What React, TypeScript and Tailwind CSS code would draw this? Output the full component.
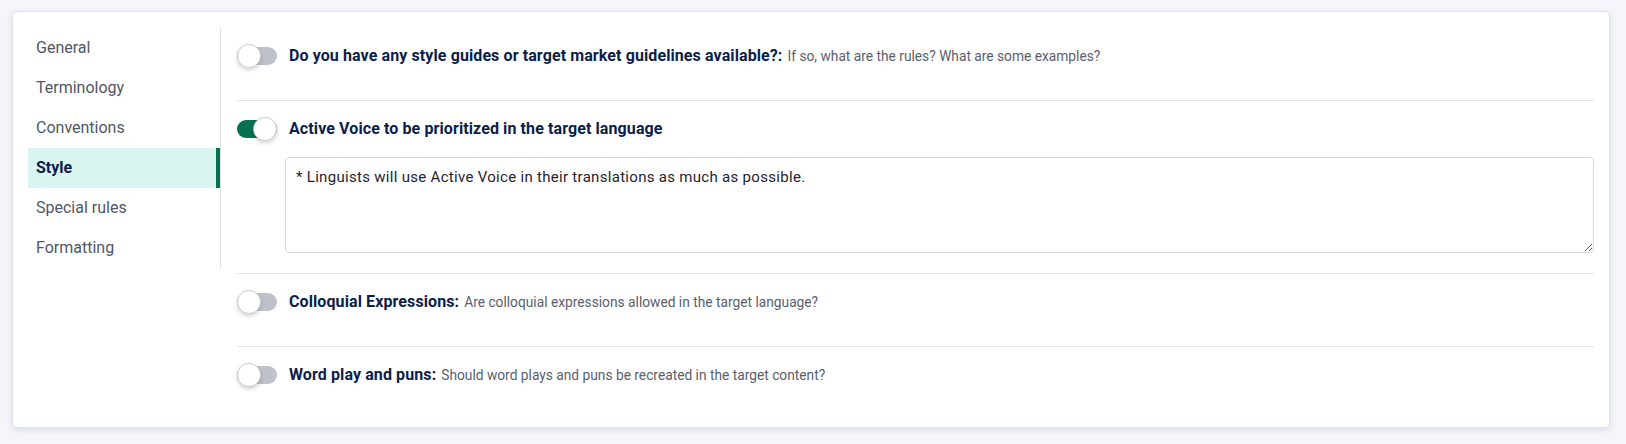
import React, { useState } from "react";

const navItems = ["General", "Terminology", "Conventions", "Style", "Special rules", "Formatting"];

function Toggle({ on }: { on: boolean }) {
  return (
    <div className="relative w-10 h-6 shrink-0 flex items-center">
      <div className={`w-10 h-[18px] rounded-full ${on ? "bg-[#07704f]" : "bg-[#bfc2cb]"}`} />
      <div
        className={`absolute top-0 ${on ? "left-4" : "left-0"} w-6 h-6 rounded-full bg-white border border-[#c9ccd4] shadow-[0_2px_4px_rgba(0,0,0,0.18)]`}
      />
    </div>
  );
}

function Row({
  on,
  title,
  desc,
  children,
  last,
}: {
  on: boolean;
  title: string;
  desc?: string;
  children?: React.ReactNode;
  last?: boolean;
}) {
  return (
    <div className={`pt-4 ${last ? "pb-[40px]" : "border-b border-[#e1e3e9]"} ${children ? "pb-[20px]" : last ? "" : "pb-8"}`}>
      <div className="flex items-center h-6">
        <Toggle on={on} />
        <div className="ml-3 whitespace-nowrap">
          <span className="text-[16px] font-bold text-[#0b1e4b] tracking-[0.1px]">{title}</span>
          {desc && <span className="ml-[5px] text-[13.75px] text-[#5a606d]">{desc}</span>}
        </div>
      </div>
      {children}
    </div>
  );
}

export default function App() {
  const [active] = useState("Style");
  return (
    <div className="w-[1626px] h-[444px] bg-[#f5f6fb] pt-[11px] pl-3" style={{ fontFamily: "Roboto, 'Noto Sans', sans-serif" }}>
      <div className="w-[1598px] bg-white rounded-[4px] border border-[#dfe1e8] shadow-[0_2px_6px_rgba(40,50,90,0.12)] flex pt-4 pl-[15px] pr-[15px]">
        <div className="w-[193px] self-start border-r border-[#dcdee4]">
          {navItems.map((it) => {
            const isActive = it === active;
            return (
              <div
                key={it}
                className={`h-10 flex items-center pl-2 text-[16px] ${
                  isActive
                    ? "bg-[#d9f5f1] border-r-4 border-[#07704f] font-bold text-[#0b1e4b]"
                    : "text-[#515766]"
                }`}
              >
                {it}
              </div>
            );
          })}
        </div>
        <div className="flex-1 pl-4">
          <Row
            on={false}
            title="Do you have any style guides or target market guidelines available?:"
            desc="If so, what are the rules? What are some examples?"
          />
          <Row on={true} title="Active Voice to be prioritized in the target language">
            <div className="mt-4 ml-12">
              <textarea
                className="block w-full h-[96px] border border-[#d6d8de] rounded-[4px] px-[10px] py-[8px] text-[15px] tracking-[0.3px] text-[#1f2430] resize-y outline-none"
                defaultValue="* Linguists will use Active Voice in their translations as much as possible."
              />
            </div>
          </Row>
          <Row
            on={false}
            title="Colloquial Expressions:"
            desc="Are colloquial expressions allowed in the target language?"
          />
          <Row
            on={false}
            last
            title="Word play and puns:"
            desc="Should word plays and puns be recreated in the target content?"
          />
        </div>
      </div>
    </div>
  );
}
